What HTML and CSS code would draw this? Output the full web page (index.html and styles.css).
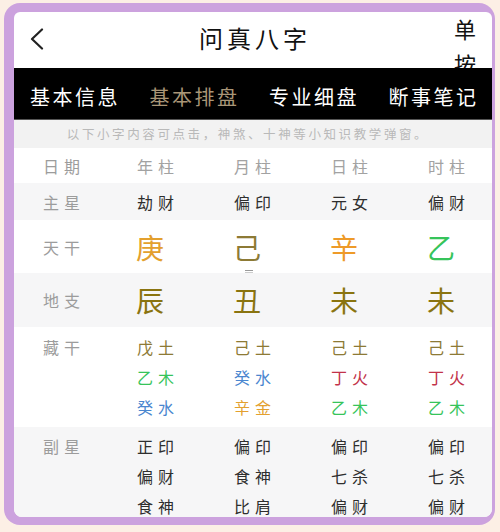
FILE: index.html
```html
<!DOCTYPE html>
<html lang="zh">
<head>
<meta charset="utf-8">
<link rel="stylesheet" href="styles.css">
</head>
<body>
<div class="frame">
  <div class="panel">
    <header class="topbar">
      <div class="back">
        <svg width="14" height="22" viewBox="0 0 14 22"><polyline points="12,1.5 2,11 12,20.5" fill="none" stroke="#222" stroke-width="2.2" stroke-linecap="round" stroke-linejoin="round"/></svg>
      </div>
      <div class="title">问真八字</div>
      <div class="side"><span class="vert">单<br>按</span></div>
    </header>
    <nav class="tabs">
      <div class="tab">基本信息</div>
      <div class="tab active">基本排盘</div>
      <div class="tab">专业细盘</div>
      <div class="tab">断事笔记</div>
    </nav>
    <div class="notice">以下小字内容可点击，神煞、十神等小知识教学弹窗。</div>
    <div class="table">
      <div class="row r-head">
        <div class="lbl">日期</div>
        <div class="cell head">年柱</div>
        <div class="cell head">月柱</div>
        <div class="cell head">日柱</div>
        <div class="cell head">时柱</div>
      </div>
      <div class="row r-main grey">
        <div class="lbl">主星</div>
        <div class="cell dark">劫财</div>
        <div class="cell dark">偏印</div>
        <div class="cell dark">元女</div>
        <div class="cell dark">偏财</div>
      </div>
      <div class="row r-big r-stem">
        <div class="lbl">天干</div>
        <div class="cell big c-gold">庚</div>
        <div class="cell big c-earth">己</div>
        <div class="cell big c-orange">辛</div>
        <div class="cell big c-green">乙</div>
        <svg class="marker" width="10" height="8" viewBox="0 0 10 8"><path d="M1 1.5h8M1 4h8M1 6.5h8" stroke="#9a9a9a" stroke-width="1"/></svg>
      </div>
      <div class="row r-big grey">
        <div class="lbl">地支</div>
        <div class="cell big c-olive">辰</div>
        <div class="cell big c-olive">丑</div>
        <div class="cell big c-olive">未</div>
        <div class="cell big c-olive">未</div>
      </div>
      <div class="row r-multi">
        <div class="lbl">藏干</div>
        <div class="cell list">
          <span class="c-earth">戊土</span>
          <span class="c-green">乙木</span>
          <span class="c-blue">癸水</span>
        </div>
        <div class="cell list">
          <span class="c-earth">己土</span>
          <span class="c-blue">癸水</span>
          <span class="c-gold">辛金</span>
        </div>
        <div class="cell list">
          <span class="c-earth">己土</span>
          <span class="c-red">丁火</span>
          <span class="c-green">乙木</span>
        </div>
        <div class="cell list">
          <span class="c-earth">己土</span>
          <span class="c-red">丁火</span>
          <span class="c-green">乙木</span>
        </div>
      </div>
      <div class="row r-multi r-last grey">
        <div class="lbl">副星</div>
        <div class="cell list dark">
          <span>正印</span><span>偏财</span><span>食神</span>
        </div>
        <div class="cell list dark">
          <span>偏印</span><span>食神</span><span>比肩</span>
        </div>
        <div class="cell list dark">
          <span>偏印</span><span>七杀</span><span>偏财</span>
        </div>
        <div class="cell list dark">
          <span>偏印</span><span>七杀</span><span>偏财</span>
        </div>
      </div>
    </div>
  </div>
</div>
</body>
</html>
```

FILE: styles.css
```css
* { box-sizing: border-box; }
html, body {
  margin: 0;
  padding: 0;
  background: #fcefe5;
  font-family: "Noto Sans CJK SC", "Noto Sans", sans-serif;
}
body {
  width: 500px;
  height: 532px;
  overflow: hidden;
  padding: 3px 0 0 4px;
}
.frame {
  width: 491px;
  height: 522px;
  background: #cca2de;
  border-radius: 16px;
  padding: 9px 3px 8px 10px;
}
.panel {
  width: 478px;
  height: 505px;
  background: #fff;
  border-radius: 6px 6px 8px 8px;
  overflow: hidden;
  display: flex;
  flex-direction: column;
}
.topbar {
  height: 56px;
  flex: none;
  display: flex;
  align-items: flex-start;
  overflow: hidden;
}
.back {
  width: 80px;
  padding: 16px 0 0 16px;
}
.back svg { display: block; }
.title {
  flex: 1;
  text-align: center;
  font-size: 24px;
  line-height: 28px;
  padding-top: 12px;
  letter-spacing: 4px;
  text-indent: 4px;
  color: #111;
}
.side {
  width: 80px;
  display: flex;
  justify-content: flex-end;
  padding-right: 16px;
}
.vert {
  display: block;
  font-size: 22px;
  line-height: 35px;
  margin-top: -1px;
  color: #111;
}
.tabs {
  height: 52px;
  flex: none;
  background: #000;
  border-bottom: 1px solid #555;
  display: grid;
  grid-template-columns: repeat(4, 1fr);
  align-items: end;
  padding-bottom: 9px;
}
.tab {
  text-align: center;
  color: #fff;
  font-size: 20px;
  line-height: 26px;
  letter-spacing: 2.5px;
  text-indent: 2.5px;
}
.tab.active { color: #a99677; }
.notice {
  height: 28px;
  flex: none;
  background: #f2f2f2;
  color: #b9b9b9;
  font-size: 12.5px;
  line-height: 28px;
  text-align: center;
  letter-spacing: 2.6px;
  padding-right: 10px;
}
.table {
  flex: 1;
  display: flex;
  flex-direction: column;
}
.row {
  display: grid;
  grid-template-columns: 123px 97px 97px 97px 1fr;
  align-items: center;
  flex: none;
  position: relative;
}
.grey { background: #f6f6f7; }
.r-head { height: 35px; }
.r-main { height: 37px; }
.r-stem { height: 53px; }
.r-big { height: 53px; }
.r-big.grey { height: 54px; }
.r-multi { height: 100px; align-items: start; padding-top: 5px; }
.r-last { height: 90px; padding-top: 4px; }
.lbl {
  padding-left: 29px;
  color: #9c9c9c;
  font-size: 16px;
  line-height: 30px;
  letter-spacing: 5px;
}
.cell {
  font-size: 16px;
  line-height: 30px;
  letter-spacing: 5px;
}
.head { color: #a2a2a2; }
.dark { color: #2e2e2e; }
.big {
  font-size: 28px;
  line-height: 40px;
  letter-spacing: 0;
  margin-left: -1px;
}
.list {
  display: flex;
  flex-direction: column;
  align-items: flex-start;
}
.list span { display: block; line-height: 30px; }
.c-gold { color: #e3a02e; }
.c-orange { color: #ee9a28; }
.c-earth { color: #8d7a35; }
.c-olive { color: #8a7410; }
.c-green { color: #36c45a; }
.c-blue { color: #4a86cf; }
.c-red { color: #c2324a; }
.marker {
  position: absolute;
  left: 230px;
  bottom: -4px;
}
```
